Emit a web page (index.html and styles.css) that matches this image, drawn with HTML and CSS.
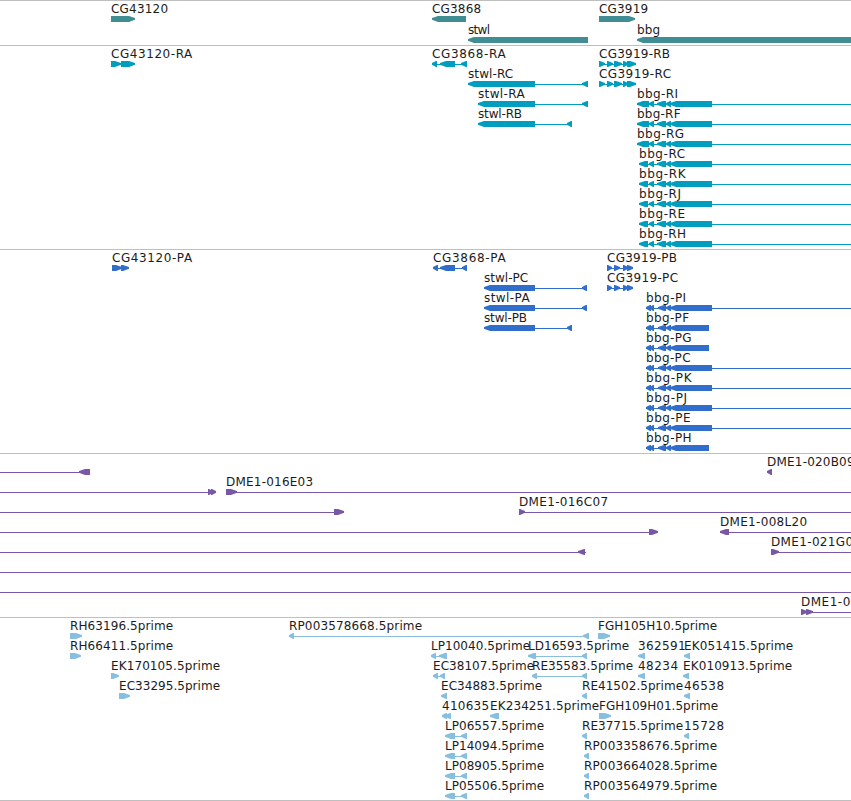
FILE: index.html
```html
<!DOCTYPE html>
<html lang="en">
<head>
<meta charset="utf-8">
<title>Genome tracks</title>
<link rel="stylesheet" href="styles.css">
</head>
<body>
<main class="browser">
  <section class="track genes"><svg id="genes" class="canvas"></svg></section>
  <section class="track transcripts"><svg id="transcripts" class="canvas"></svg></section>
  <section class="track proteins"><svg id="proteins" class="canvas"></svg></section>
  <section class="track clones"><svg id="clones" class="canvas"></svg></section>
  <section class="track ests"><svg id="ests" class="canvas"></svg></section>
</main>
<script src="script.js"></script>
</body>
</html>
```
FILE: styles.css
```css
body {
  margin: 0;
  background: #fff;
  overflow: hidden;
}

.browser {
  display: flex;
  flex-direction: column;
  width: 851px;
  height: 800px;
  border-bottom: 1px solid #bfbfbf;
}

.track {
  box-sizing: border-box;
  flex: none;
  border-top: 1px solid #bfbfbf;
}

.canvas {
  display: block;
  width: 100%;
  height: 100%;
}

.genes { height: 45px; color: #408e94; }
.transcripts { height: 204px; color: #009ebe; }
.proteins { height: 204px; color: #316dcb; }
.clones { height: 164px; color: #7858a6; }
.ests { height: 183px; color: #88bfdf; }

.shape {
  fill: currentColor;
}

.label {
  fill: #1c1c1c;
  font-family: "DejaVu Sans", sans-serif;
  font-size: 12px;
}
```
FILE: script.js
```js
const NS = "http://www.w3.org/2000/svg";

// Each feature: [row top, strand, label, label x, label right edge,
//                [exon start, exon end, ...], [line start, line end]]
const L = -1, R = 1;
const data = { genes: [], transcripts: [], proteins: [], clones: [], ests: [] };

data.genes.push(
  [15, R, "CG43120", 111, 167.5, [111, 135]],
  [15, L, "CG3868", 432, 480.5, [432, 466]],
  [15, R, "CG3919", 599, 647.5, [599, 635]],
  [36, L, "stwl", 468, 489.5, [468, 588]],
  [36, L, "bbg", 637, 659.5, [637, 860]]
);

data.transcripts.push(
  [15, R, "CG43120-RA", 111, 191.7, [111, 121, 121, 135]],
  [15, L, "CG3868-RA", 432, 505, [432, 437, 440, 455, 461, 467], [432, 467]],
  [35, L, "stwl-RC", 468, 512.5, [468, 535, 582, 588], [468, 588]],
  [55, L, "stwl-RA", 478, 524, [478, 535, 582, 588], [478, 588]],
  [75, L, "stwl-RB", 478, 521.5, [478, 535, 567, 572], [478, 572]],
  [15, R, "CG3919-RB", 599, 669.5, [599, 605, 607, 613, 614, 622, 623, 628, 627, 636], [599, 636]],
  [35, R, "CG3919-RC", 599, 670.5, [599, 605, 607, 613, 614, 622, 623, 628, 627, 636], [599, 636]]
);
[["RI", 677.5], ["RF", 680], ["RG", 683.5], ["RC", 684.5], ["RK", 685], ["RJ", 680.5], ["RE", 684.5], ["RH", 685.5]]
  .forEach(([n, end], i) => {
    const x = i < 3 ? 637 : 639;
    data.transcripts.push([55 + 20 * i, L, "bbg-" + n, x, end,
      [x, i < 3 ? 649 : 648, 649, 654, 657, 666, 666, 671, 670, 712], [x, 851]]);
  });

data.proteins.push(
  [15, R, "CG43120-PA", 112, 191.5, [112, 122, 121, 129]],
  [15, L, "CG3868-PA", 433, 505, [433, 438, 440, 455, 462, 467], [433, 467]],
  [35, L, "stwl-PC", 484, 527.5, [484, 535, 582, 587], [484, 587]],
  [55, L, "stwl-PA", 484, 529, [484, 535, 582, 587], [484, 587]],
  [75, L, "stwl-PB", 484, 526.5, [484, 535, 567, 572], [484, 572]],
  [15, R, "CG3919-PB", 607, 676.5, [607, 612, 614, 620, 623, 628, 627, 633], [607, 633]],
  [35, R, "CG3919-PC", 607, 677.5, [607, 612, 614, 620, 623, 628, 627, 633], [607, 633]]
);
[["PI", 685.5], ["PF", 688.5], ["PG", 691], ["PC", 690], ["PK", 691], ["PJ", 686.5], ["PE", 690], ["PH", 691]]
  .forEach(([n, end], i) => {
    const short = [1, 2, 7].includes(i);
    data.proteins.push([55 + 20 * i, L, "bbg-" + n, 646, end,
      [646, 651, 650, 654, 658, 666, 666, 671, 670, short ? 709 : 712], [646, short ? 709 : 851]]);
  });

data.clones.push(
  [15, L, "", 0, 0, [79, 90], [0, 90]],
  [15, L, "DME1-020B09", 767, 854, [767, 772]],
  [35, R, "", 0, 0, [208, 213, 211, 216], [0, 216]],
  [35, R, "DME1-016E03", 226, 312.5, [226, 237], [226, 851]],
  [55, R, "", 0, 0, [334, 344], [0, 344]],
  [55, R, "DME1-016C07", 519, 607.5, [519, 525], [519, 851]],
  [75, R, "", 0, 0, [649, 658], [0, 658]],
  [75, L, "DME1-008L20", 720, 806.5, [720, 729], [720, 851]],
  [95, L, "", 0, 0, [578, 585], [0, 586]],
  [95, R, "DME1-021G0", 771, 852.5, [771, 779], [771, 851]],
  [115, R, "", 0, 0, [], [0, 851]],
  [135, R, "", 0, 0, [], [0, 851]],
  [155, R, "DME1-0", 801, 849.7, [801, 807, 806, 813], [801, 851]]
);

data.ests.push(
  [15, R, "RH63196.5prime", 70, 172.5, [70, 82]],
  [35, R, "RH66411.5prime", 70, 172.5, [70, 81]],
  [55, R, "EK170105.5prime", 111, 219.5, [111, 119]],
  [75, R, "EC33295.5prime", 119, 219.5, [119, 130]],
  [15, L, "RP003578668.5prime", 289, 421.5, [289, 294, 583, 589], [289, 589]],
  [15, R, "FGH105H10.5prime", 598, 716.5, [598, 610]],
  [35, L, "LP10040.5prime", 431, 529.5, [431, 436, 439, 447], [431, 447]],
  [35, L, "LD16593.5prime", 528, 628.5, [528, 536, 582, 587], [528, 587]],
  [35, L, "362591", 638, 685, [638, 645]],
  [35, L, "EK051415.5prime", 684, 792.5, [684, 690]],
  [55, L, "EC38107.5prime", 433, 533.5, [433, 438, 440, 445], [433, 445]],
  [55, L, "RE35583.5prime", 532, 632.5, [532, 537, 582, 587], [532, 587]],
  [55, L, "48234", 638, 677.5, [638, 645]],
  [55, L, "EK010913.5prime", 683, 791.5, [683, 689]],
  [75, L, "EC34883.5prime", 441, 541.5, [441, 447]],
  [75, L, "RE41502.5prime", 582, 682.5, [582, 587]],
  [75, L, "46538", 684, 723.5, [684, 690]],
  [95, L, "410635", 442, 488.5, [442, 447, 445, 451]],
  [95, L, "EK234251.5prime", 490, 598.5, [490, 499]],
  [95, R, "FGH109H01.5prime", 599, 717.5, [599, 611]],
  [115, L, "LP06557.5prime", 445, 543.5, [445, 455, 461, 467], [445, 467]],
  [115, L, "RE37715.5prime", 582, 682.5, [582, 587]],
  [115, L, "15728", 684, 723.5, [684, 689]],
  [135, L, "LP14094.5prime", 445, 543.5, [445, 455, 461, 467], [445, 467]],
  [135, L, "RP003358676.5prime", 584, 716.5, [584, 589]],
  [155, L, "LP08905.5prime", 445, 543.5, [445, 455, 461, 467], [445, 467]],
  [155, L, "RP003664028.5prime", 584, 716.5, [584, 589]],
  [175, L, "LP05506.5prime", 445, 543.5, [445, 455, 461, 467], [445, 467]],
  [175, L, "RP003564979.5prime", 584, 716.5, [584, 589]]
);

function add(svg, tag, attrs, text) {
  const el = document.createElementNS(NS, tag);
  for (const k in attrs) el.setAttribute(k, attrs[k]);
  if (text) el.textContent = text;
  svg.appendChild(el);
}

// Exon box six pixels tall, pointed towards its strand.
function arrow(a, b, y, strand) {
  const head = Math.min(6, b - a - 1);
  const tip = strand === R ? b : a;
  const neck = tip - strand * head;
  const tail = strand === R ? a : b;
  return `${tail},${y} ${neck},${y} ${tip},${y + 2} ${tip},${y + 3.8} ${neck},${y + 6} ${tail},${y + 6}`;
}

for (const id in data) {
  const svg = document.getElementById(id);
  for (const [y, strand, name, x, end, exons, line] of data[id]) {
    if (line) add(svg, "rect", { class: "shape", x: line[0], y: y + 3, width: line[1] - line[0], height: 1 });
    for (let i = 0; i < exons.length; i += 2)
      add(svg, "polygon", { class: "shape", points: arrow(exons[i], exons[i + 1], y, strand) });
    if (name) add(svg, "text", { class: "label", x, y: y - 3, textLength: end - x + 0.6 }, name);
  }
}
```
